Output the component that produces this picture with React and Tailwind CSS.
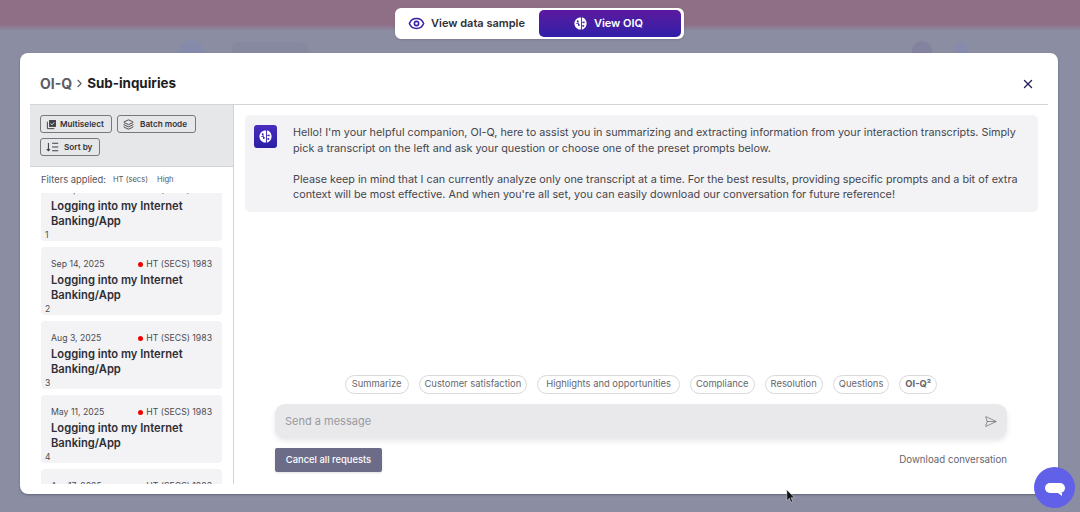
import { ChevronRight, Eye, Layers, SendHorizontal, X } from "lucide-react";

const FONT = "font-['Inter','Liberation_Sans',sans-serif]";

const transcripts = [
  { date: "Oct 2, 2025", n: 1 },
  { date: "Sep 14, 2025", n: 2 },
  { date: "Aug 3, 2025", n: 3 },
  { date: "May 11, 2025", n: 4 },
  { date: "Apr 17, 2025", n: 5 },
];

const prompts = [
  { label: "Summarize", pad: "px-[6px]" },
  { label: "Customer satisfaction", pad: "px-[5px]" },
  { label: "Highlights and opportunities", pad: "px-[8px]" },
  { label: "Compliance", pad: "px-[5px]" },
  { label: "Resolution", pad: "px-[5px]" },
  { label: "Questions", pad: "px-[5px]" },
];

function BrainIcon({ className }) {
  return (
    <svg viewBox="0 0 16 16" className={className}>
      <path fill="#fff" d="M8 1.5C4.4 1.5 1.5 4.4 1.5 8c0 2.4 1.2 4.3 3.1 5.4.4.7 1.1 1.1 2 1.1h1.9V1.5H8zm1.5 0v13h.2c.9 0 1.6-.4 2-1.1 1.7-1 2.8-3 2.8-5.4 0-3.6-2.4-6.5-5-6.5z" />
      <circle cx="5" cy="5.6" r="1" fill="#3b1fa8" />
      <circle cx="6.2" cy="9.6" r="1" fill="#3b1fa8" />
      <circle cx="11.6" cy="6.8" r="0.9" fill="#3b1fa8" />
      <circle cx="11.2" cy="10.6" r="0.9" fill="#3b1fa8" />
      <path stroke="#3b1fa8" strokeWidth="0.8" fill="none" d="M5 5.6l1.2 4M3.4 8h2.4M11.6 6.8H9.5M11.2 10.6H9.5" />
    </svg>
  );
}

function MultiIcon() {
  return (
    <svg viewBox="0 0 16 16" className="h-[11px] w-[11px]">
      <path fill="#3f3f46" d="M4.5 1.5h10v10h-10z" />
      <path fill="none" stroke="#fff" strokeWidth="1.3" d="M6.8 6.6l1.8 1.9 3.3-3.6" />
      <path fill="none" stroke="#3f3f46" strokeWidth="1.4" d="M2 4v10h10" />
    </svg>
  );
}

function SortIcon() {
  return (
    <svg viewBox="0 0 16 12" className="h-[10px] w-[13px]" fill="none" stroke="#3f3f46" strokeWidth="1.3">
      <path d="M3 1v9.5M1 8.5l2 2.2 2-2.2M7.5 1.5H15M7.5 6H15M7.5 10.5H15" />
    </svg>
  );
}

function ToolButton({ icon, label, className }) {
  return (
    <button className={`flex h-[18px] items-center rounded-[3px] border border-[#77777f] pl-[5px] text-[8.2px] font-semibold text-[#33333a] ${className}`}>
      {icon}
      <span>{label}</span>
    </button>
  );
}

function TranscriptCard({ date, n }) {
  return (
    <div className="mb-[6px] h-[68px] shrink-0 rounded-[4px] bg-[#f3f3f5] px-[10px] pt-[10px]">
      <div className="flex items-center justify-between text-[8.7px] leading-[14px] text-[#4b4b52]">
        <span>{date}</span>
        <span className="flex items-center gap-[3px]">
          <span className="h-[5px] w-[5px] rounded-full bg-[#f00000]" />
          HT (SECS) 1983
        </span>
      </div>
      <div className="mt-[2px] text-[11.2px] font-semibold leading-[15px] text-[#2e2e34]">
        Logging into my Internet<br />Banking/App
      </div>
      <div className="-ml-[6px] text-[8.5px] leading-[12px] text-[#4b4b52]">{n}</div>
    </div>
  );
}

export default function App() {
  return (
    <div className={`${FONT} relative h-[512px] w-[1080px] overflow-hidden bg-[#8b8da3]`}>
      {/* blurred page behind the modal */}
      <div className="h-[25px] bg-[#8f6f85]" />
      <div className="h-[6px] bg-gradient-to-b from-[#8f7289] to-[#8b8da3]" />
      <div className="absolute left-[178px] top-[41px] h-[12px] w-[26px] rounded-t-full bg-[#868bab]" />
      <div className="absolute left-[232px] top-[42px] h-[11px] w-[76px] rounded-t-md bg-[#8789a0]" />
      <div className="absolute left-[912px] top-[41px] h-[12px] w-[20px] rounded-t-full bg-[#83839f]" />
      <div className="absolute left-[955px] top-[42px] h-[11px] w-[12px] rounded-t-full bg-[#868aab]" />

      {/* view switcher */}
      <div className="absolute left-[395px] top-[8px] flex h-[31px] w-[289px] items-center rounded-[6px] border-2 border-white bg-white shadow-sm">
        <div className="flex w-[142px] items-center justify-center gap-[6px] pr-[3px] text-[11px] font-semibold text-[#2f2f36]">
          <Eye className="h-[17px] w-[17px] text-[#3b1fa8]" strokeWidth={2.2} />
          View data sample
        </div>
        <div className="flex h-[27px] w-[142px] items-center justify-center gap-[6px] rounded-[5px] bg-gradient-to-b from-[#5a189f] to-[#2f1fa8] pr-[4px] text-[11px] font-semibold text-white">
          <BrainIcon className="h-[15px] w-[15px]" />
          View OIQ
        </div>
      </div>

      {/* modal */}
      <div className="absolute left-[20px] top-[53px] flex h-[441px] w-[1038px] flex-col rounded-[8px] bg-white px-[10px] pb-[10px] shadow-[0_1px_2px_rgba(60,60,80,0.5)]">
        <div className="flex h-[52px] shrink-0 items-center justify-between border-b border-[#d4d4d8] pl-[10px] pr-[13px] pt-[10px]">
          <div className="flex items-center gap-[1px] font-bold">
            <span className="text-[14px] text-[#5c5c63]">OI-Q</span>
            <ChevronRight className="h-[13px] w-[13px] text-[#5c5c63]" strokeWidth={2} />
            <span className="text-[13.4px] text-[#1d1d22]">Sub-inquiries</span>
          </div>
          <X className="h-[14px] w-[14px] text-[#26235e]" strokeWidth={2.4} />
        </div>

        <div className="flex min-h-0 flex-1">
          {/* sidebar */}
          <div className="flex w-[204px] shrink-0 flex-col border-r border-[#d4d4d8]">
            <div className="flex h-[62px] shrink-0 flex-wrap content-start gap-[5px] border-b border-[#d4d4d8] bg-[#e6e7e9] pl-[10px] pt-[10px]">
              <ToolButton icon={<MultiIcon />} label="Multiselect" className="w-[72px] gap-[3px]" />
              <ToolButton icon={<Layers className="h-[11px] w-[11px] text-[#3f3f46]" />} label="Batch mode" className="w-[79px] gap-[6px]" />
              <ToolButton icon={<SortIcon />} label="Sort by" className="w-[60px] gap-[5px]" />
            </div>
            <div className="flex h-[26px] shrink-0 items-center pl-[11px] text-[9.4px] text-[#55555c]">
              <span className="mr-[7px]">Filters applied:</span>
              <span className="mr-[9px] text-[7.6px]">HT (secs)</span>
              <span className="text-[7.6px]">High</span>
            </div>
            {/* list is scrolled a little, so the first card is clipped at the top */}
            <div className="min-h-0 flex-1 overflow-hidden px-[11px]">
              <div className="-mt-[20px] flex flex-col">
                {transcripts.map((t) => (
                  <TranscriptCard key={t.n} date={t.date} n={t.n} />
                ))}
              </div>
            </div>
          </div>

          {/* chat */}
          <div className="flex min-w-0 flex-1 flex-col pb-[12px] pl-[11px] pr-[10px] pt-[10px]">
            <div className="flex h-[97px] shrink-0 rounded-[5px] bg-[#f3f3f5] pl-[9px] pt-[10px] text-[10.8px] leading-[15.5px] text-[#45454c]">
              <div className="mr-[16px] flex h-[23px] w-[23px] shrink-0 items-center justify-center rounded-[3px] bg-gradient-to-b from-[#4a2cc0] to-[#2a1fa5]">
                <BrainIcon className="h-[15px] w-[15px]" />
              </div>
              <div className="whitespace-nowrap">
                <p>Hello! I'm your helpful companion, OI-Q, here to assist you in summarizing and extracting information from your interaction transcripts. Simply</p>
                <p>pick a transcript on the left and ask your question or choose one of the preset prompts below.</p>
                <p className="mt-[15.5px]">Please keep in mind that I can currently analyze only one transcript at a time. For the best results, providing specific prompts and a bit of extra</p>
                <p>context will be most effective. And when you're all set, you can easily download our conversation for future reference!</p>
              </div>
            </div>

            <div className="mt-auto flex flex-col pl-[30px] pr-[31px]">
              <div className="flex justify-center gap-[10px]">
                {prompts.map((p) => (
                  <span key={p.label} className={`flex h-[19px] items-center rounded-full border border-[#d9d9dd] text-[9.4px] text-[#66666d] ${p.pad}`}>
                    {p.label}
                  </span>
                ))}
                <span className="flex h-[19px] items-center rounded-full border border-[#d9d9dd] px-[5px] text-[9.4px] font-bold text-[#66666d]">
                  OI-Q²
                </span>
              </div>
              <div className="mt-[10px] flex h-[34px] items-center justify-between rounded-[10px] bg-[#e9e9eb] px-[10px] text-[11px] text-[#9a9aa1] shadow-[0_3px_5px_rgba(225,225,230,0.8)]">
                <span>Send a message</span>
                <SendHorizontal className="h-[13px] w-[13px] text-[#66666d]" strokeWidth={1.3} />
              </div>
              <div className="mt-[10px] flex items-center justify-between">
                <button className="flex h-[24px] w-[107px] items-center justify-center rounded-[2px] bg-[#6c6c88] text-[9.4px] font-medium text-white shadow-sm">
                  Cancel all requests
                </button>
                <span className="text-[9.7px] text-[#66666d]">Download conversation</span>
              </div>
            </div>
          </div>
        </div>
      </div>

      {/* chat launcher */}
      <div className="absolute left-[1034px] top-[467px] flex h-[41px] w-[41px] items-center justify-center rounded-full bg-[#6060e8]">
        <div className="relative h-[10px] w-[20px] rounded-[5px] bg-white">
          <div className="absolute -bottom-[3px] right-[3px] h-0 w-0 border-l-[4px] border-t-[3px] border-l-transparent border-t-white" />
        </div>
      </div>

      {/* mouse pointer */}
      <svg viewBox="0 0 12 16" className="absolute left-[786px] top-[489px] h-[15px] w-[10px]">
        <path d="M1 0v13l3-3 2 5 2-1-2-4.6h4z" fill="#111" stroke="#fff" strokeWidth="0.5" />
      </svg>
    </div>
  );
}
